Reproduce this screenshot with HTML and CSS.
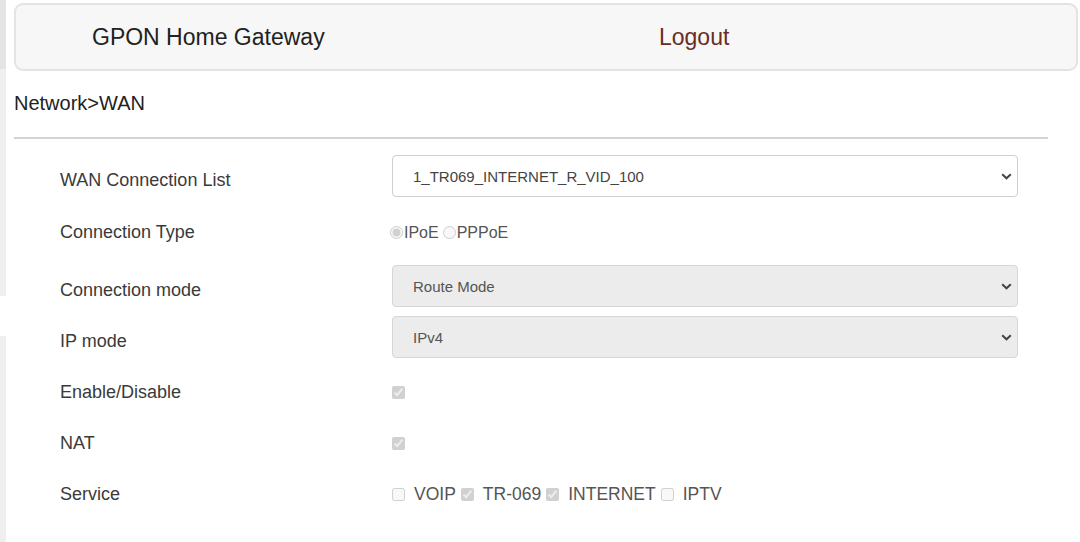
FILE: index.html
```html
<!DOCTYPE html>
<html lang="en">
<head>
    <meta charset="UTF-8">
    <meta name="viewport" content="width=device-width, initial-scale=1.0">
    <title>GPON Home Gateway</title>
    <link rel="stylesheet" href="styles.css">
</head>
<body>
    <div class="page">
        <div class="edge">
            <div class="edge-top"></div>
            <div class="edge-mid"></div>
            <div class="edge-gap"></div>
            <div class="edge-low"></div>
        </div>

        <div class="main">
            <div class="topbar">
                <span class="brand">GPON Home Gateway</span>
                <a class="logout" href="#">Logout</a>
            </div>

            <div class="crumb">Network&gt;WAN</div>
            <hr class="rule">

            <form class="wan-form">
                <div class="row row-first">
                    <label for="wanList">WAN Connection List</label>
                    <select id="wanList" name="wanList">
                        <option>1_TR069_INTERNET_R_VID_100</option>
                    </select>
                </div>

                <div class="row row-type">
                    <label>Connection Type</label>
                    <div class="choices radios">
                        <input type="radio" name="connType" checked disabled><span>IPoE</span>
                        <input type="radio" name="connType" disabled><span>PPPoE</span>
                    </div>
                </div>

                <div class="row row-sel">
                    <label for="connMode">Connection mode</label>
                    <select id="connMode" name="connMode" disabled>
                        <option>Route Mode</option>
                    </select>
                </div>

                <div class="row row-sel">
                    <label for="ipMode">IP mode</label>
                    <select id="ipMode" name="ipMode" disabled>
                        <option>IPv4</option>
                    </select>
                </div>

                <div class="row row-check">
                    <label>Enable/Disable</label>
                    <div class="choices"><input type="checkbox" checked disabled></div>
                </div>

                <div class="row row-check">
                    <label>NAT</label>
                    <div class="choices"><input type="checkbox" checked disabled></div>
                </div>

                <div class="row row-check">
                    <label>Service</label>
                    <div class="choices">
                        <input type="checkbox" disabled> <span>VOIP</span>
                        <input type="checkbox" checked disabled> <span>TR-069</span>
                        <input type="checkbox" checked disabled> <span>INTERNET</span>
                        <input type="checkbox" disabled> <span>IPTV</span>
                    </div>
                </div>

                <div class="row row-check row-last">
                    <label>Enable VLAN</label>
                    <div class="choices"><input type="checkbox" checked disabled></div>
                </div>
            </form>
        </div>
    </div>
</body>
</html>
```

FILE: styles.css
```css
html, body {
    margin: 0;
    padding: 0;
    height: 100%;
    overflow: hidden;
    background: #fff;
}

body {
    font-family: 'Liberation Sans', Arial, sans-serif;
    color: #333;
}

.page {
    display: flex;
    height: 542px;
}

/* strip of the side menu that peeks in on the left */
.edge {
    width: 6px;
    display: flex;
    flex-direction: column;
    flex-shrink: 0;
}

.edge-top {
    height: 69px;
    background: #e4e4e4;
}

.edge-mid {
    height: 227px;
    background: #efefef;
}

.edge-gap {
    height: 40px;
    background: #fff;
}

.edge-low {
    flex: 1;
    background: #efefef;
}

.main {
    flex: 1;
    padding-left: 8px;
}

.topbar {
    box-sizing: border-box;
    height: 68px;
    margin: 3px 2px 0 0;
    padding-left: 76px;
    display: flex;
    align-items: center;
    background: #f7f7f7;
    border: 2px solid #e3e3e3;
    border-radius: 9px;
    font-size: 23px;
}

.brand {
    width: 567px;
    color: #222;
}

.logout {
    color: #6b2d22;
    text-decoration: none;
}

.crumb {
    margin-top: 22px;
    font-size: 20px;
    line-height: 20px;
    color: #222;
}

.rule {
    height: 2px;
    margin: 24px 32px 0 0;
    border: none;
    background: #d4d4d4;
}

.wan-form {
    padding: 16px 0 0 46px;
}

.row {
    display: flex;
    align-items: center;
}

.row label {
    width: 332px;
    font-size: 18px;
    color: #3a3a3a;
}

.row-first label,
.row-sel label {
    padding-top: 8px;
}

.row-first {
    height: 42px;
    margin-bottom: 13px;
}

.row-type {
    height: 45px;
    margin-bottom: 10px;
}

.row-sel {
    height: 42px;
    margin-bottom: 9px;
}

.row-sel + .row-check {
    margin-top: 1px;
}

.row-check {
    height: 51px;
}

.row-last {
    margin-top: 4px;
}

select {
    box-sizing: border-box;
    width: 626px;
    height: 42px;
    padding: 0 30px 0 20px;
    border: 1px solid #cfcfcf;
    border-radius: 4px;
    appearance: none;
    -webkit-appearance: none;
    background: #fff url("data:image/svg+xml,%3Csvg xmlns='http://www.w3.org/2000/svg' width='11' height='7' viewBox='0 0 11 7'%3E%3Cpath d='M1.2 1.2 5.5 5.3 9.8 1.2' fill='none' stroke='%23444' stroke-width='2'/%3E%3C/svg%3E") no-repeat right 5px center;
    font-family: 'Liberation Sans', Arial, sans-serif;
    font-size: 15px;
    color: #444;
}

select:disabled {
    background-color: #ececec;
    border-color: #d6d6d6;
    color: #555;
    opacity: 1;
}

.choices {
    display: flex;
    align-items: center;
    font-size: 17.5px;
    color: #555;
}

.choices input {
    margin: 0 3px 0 0;
}

.radios {
    font-size: 16px;
}

.choices input[type="radio"] {
    width: 13px;
    height: 13px;
    margin: 0 1px 0 -2px;
}

.choices span + input[type="radio"] {
    margin-left: 4px;
}

.choices input[type="checkbox"] {
    width: 13px;
    height: 13px;
}

.choices span {
    margin-left: 6px;
    margin-right: 5px;
}

.choices input[type="radio"] + span {
    margin-left: 0;
    margin-right: 0;
}
```
